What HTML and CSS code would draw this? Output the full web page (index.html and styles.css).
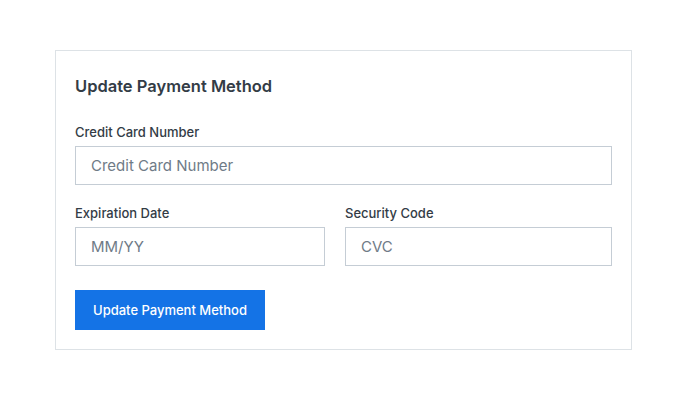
FILE: index.html
```html
<!DOCTYPE html>
<html>
<head>
<meta charset="utf-8">
<link rel="stylesheet" href="styles.css">
</head>
<body>
<div class="page">
  <form class="card">
    <h2 class="title">Update Payment Method</h2>
    <div class="field">
      <label class="label">Credit Card Number</label>
      <input class="input" placeholder="Credit Card Number">
    </div>
    <div class="row">
      <div class="field">
        <label class="label">Expiration Date</label>
        <input class="input" placeholder="MM/YY">
      </div>
      <div class="field">
        <label class="label">Security Code</label>
        <input class="input" placeholder="CVC">
      </div>
    </div>
    <button type="button" class="btn">Update Payment Method</button>
  </form>
</div>
</body>
</html>
```
FILE: styles.css
```css
html, body { margin: 0; padding: 0; background: #fff; }
body { font-family: Inter, "Noto Sans", sans-serif; color: #333c46; }
.page { padding: 50px 56px 0 55px; }
.card {
  width: 537px;
  border: 1px solid #dde2e6;
  padding: 23px 19px 19px 19px;
  display: flex;
  flex-direction: column;
  align-items: flex-start;
}
.title { margin: 0 0 26px; font-size: 16.5px; font-weight: 600; line-height: 24px; color: #333c46; }
.field { display: flex; flex-direction: column; width: 100%; margin-bottom: 20px; }
.label { font-size: 13px; font-weight: 500; line-height: 16px; margin-bottom: 6px; color: #333c46; }
.input {
  box-sizing: border-box;
  height: 39px;
  width: 100%;
  border: 1px solid #c5cdd5;
  padding: 0 15px;
  font-family: inherit;
  font-size: 15px;
  color: #333c46;
  outline: none;
}
.input::placeholder { color: #6f7b87; }
.row { display: grid; grid-template-columns: 250px 1fr; column-gap: 20px; width: 100%; }
.btn {
  margin-top: 4px;
  height: 40px;
  padding: 0 17px 0 17px;
  min-width: 190px;
  background: #1473e6;
  border: none;
  color: #fff;
  font-family: inherit;
  font-size: 13px;
  font-weight: 500;
}
```
